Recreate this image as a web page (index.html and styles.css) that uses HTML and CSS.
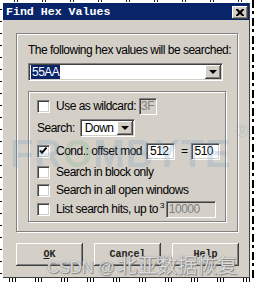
FILE: index.html
```html
<!DOCTYPE html>
<html>
<head>
<meta charset="utf-8">
<link rel="stylesheet" href="styles.css">
</head>
<body>
<div class="edge-left"></div>
<div class="edge-top"></div>
<div class="edge-right"></div>
<div class="edge-bottom"></div>
<div class="frame">
  <div class="titlebar">
    <span class="title">Find Hex Values</span>
    <span class="close"><svg width="8" height="7" viewBox="0 0 8 7"><path d="M0 0h2l2 2 2-2h2v1l-2.5 2.5 2.5 2.5v1h-2l-2-2-2 2h-2v-1l2.5-2.5-2.5-2.5z" fill="#000"/></svg></span>
  </div>
  <div class="content">
    <div class="group outer">
      <div class="lead">The following hex values will be searched:</div>
      <div class="combo">
        <span class="combo-value"><span class="sel">55AA</span></span>
        <span class="arrow-btn"><span class="tri"></span></span>
      </div>
      <div class="group inner">
        <div class="row r1">
          <span class="cb"></span>
          <span class="label">Use as wildcard:</span>
          <span class="field disabled w-wild">3F</span>
        </div>
        <div class="row r2">
          <span class="label">Search:</span>
          <span class="dropdown"><span class="dd-value">Down</span><span class="arrow-btn"><span class="tri"></span></span></span>
        </div>
        <div class="row r3">
          <span class="cb"><svg width="11" height="11" viewBox="0 0 11 11"><path d="M2 4.5l2 2.2 4.5-5" fill="none" stroke="#000" stroke-width="2"/></svg></span>
          <span class="label">Cond.: offset mod</span>
          <span class="field w-num">512</span>
          <span class="eq">=</span>
          <span class="field w-num">510</span>
        </div>
        <div class="row r4">
          <span class="cb"></span>
          <span class="label">Search in block only</span>
        </div>
        <div class="row r5">
          <span class="cb"></span>
          <span class="label">Search in all open windows</span>
        </div>
        <div class="row r6">
          <span class="cb"></span>
          <span class="label">List search hits, up to<sup class="sup">3</sup></span>
          <span class="field disabled w-hits">10000</span>
        </div>
      </div>
    </div>
    <div class="buttons">
      <button class="btn"><u>O</u>K</button>
      <button class="btn">Cancel</button>
      <button class="btn">Help</button>
    </div>
  </div>
</div>
<div class="wm-brand">FR<span class="wm-o">O</span>MBYTE</div>
<div class="wm-reg">®</div>
<div class="wm-csdn"><span class="wm-latin">CSDN @</span>北亚数据恢复</div>
</body>
</html>
```

FILE: styles.css
```css
html, body {
  margin: 0;
  padding: 0;
}
body {
  width: 254px;
  height: 282px;
  position: relative;
  overflow: hidden;
  background: #ffffff;
  font-family: "Liberation Sans", Arial, sans-serif;
  font-size: 12px;
  letter-spacing: -0.5px;
  color: #000;
}
.edge-left {
  position: absolute;
  left: 0; top: 0;
  width: 2px; height: 282px;
  background: repeating-linear-gradient(to bottom, #fff 0 9px, #000 9px 10px, #fff 10px 12px);
}
.edge-top {
  position: absolute;
  left: 0; top: 0;
  width: 254px; height: 2px;
  background: repeating-linear-gradient(to right, #fff 0 14px, #222 14px 15px, #fff 15px 17px, #222 17px 18px, #fff 18px 28px);
}
.edge-right {
  position: absolute;
  right: 0; top: 0;
  width: 2px; height: 282px;
  background: repeating-linear-gradient(to bottom, #000 0 8px, #fff 8px 11px, #000 11px 14px, #fff 14px 18px);
}
.edge-bottom {
  position: absolute;
  left: 0; bottom: 0;
  width: 254px; height: 4px;
  background: repeating-linear-gradient(to right, #fff 0 9px, #000 9px 10px, #fff 10px 12px, #000 12px 13px, #fff 13px 15px, #000 15px 16px, #fff 16px 26px);
}
.frame {
  position: relative;
  margin: 3px 0 0 3px;
  width: 247px;
  height: 275px;
  box-sizing: border-box;
  background: #d4d0c8;
  border-right: 1px solid #404040;
  border-bottom: 1px solid #404040;
  display: flex;
  flex-direction: column;
}
.titlebar {
  height: 17px;
  background: #0a246a;
  display: flex;
  align-items: center;
  justify-content: space-between;
  padding: 0 1px 0 3px;
}
.title {
  color: #fff;
  font-family: "Liberation Mono", "DejaVu Sans Mono", monospace;
  font-weight: bold;
  font-size: 11.6px;
  letter-spacing: 0;
  white-space: nowrap;
}
.close {
  width: 16px;
  height: 13px;
  box-sizing: border-box;
  background: #d4d0c8;
  box-shadow: inset -1px -1px #404040, inset 1px 1px #fff, inset -2px -2px #808080;
  display: flex;
  align-items: center;
  justify-content: center;
  margin-top: 1px;
}
.content {
  padding: 13px 0 0 13px;
}
.group {
  box-sizing: border-box;
  border: 1px solid #808080;
  box-shadow: 1px 1px 0 #fff, inset 1px 1px 0 #fff;
}
.outer {
  width: 222px;
  height: 199px;
  padding: 9px 0 0 11px;
}
.lead {
  line-height: 15px;
  white-space: nowrap;
}
.combo {
  margin-top: 5px;
  width: 195px;
  height: 18px;
  box-sizing: border-box;
  background: #fff;
  border: 1px solid;
  border-color: #808080 #fff #fff #808080;
  box-shadow: inset 1px 1px #404040, inset -1px -1px #d4d0c8;
  display: flex;
  align-items: stretch;
  padding: 1px;
}
.combo-value {
  flex: 1;
  display: flex;
  align-items: center;
  padding-left: 1px;
}
.sel {
  background: #0a246a;
  color: #fff;
  line-height: 14px;
  padding: 0 1px;
}
.arrow-btn {
  width: 16px;
  box-sizing: border-box;
  background: #d4d0c8;
  box-shadow: inset -1px -1px #404040, inset 1px 1px #fff, inset -2px -2px #808080;
  display: flex;
  align-items: center;
  justify-content: center;
}
.tri {
  width: 0;
  height: 0;
  border-left: 4px solid transparent;
  border-right: 4px solid transparent;
  border-top: 4px solid #000;
}
.inner {
  margin-top: 10px;
  width: 198px;
  height: 131px;
  padding: 0 0 0 8px;
  display: flex;
  flex-direction: column;
}
.row {
  height: 18px;
  display: flex;
  align-items: center;
  white-space: nowrap;
}
.r1 { margin-top: 5px; }
.r2 { margin-top: 4px; }
.r3 { margin-top: 5px; }
.r4 { margin-top: 3px; }
.r5 { margin-top: 0; }
.r6 { margin-top: 1px; }
.cb {
  width: 13px;
  height: 13px;
  box-sizing: border-box;
  background: #fff;
  border: 1px solid;
  border-color: #808080 #fff #fff #808080;
  box-shadow: inset 1px 1px #404040, inset -1px -1px #d4d0c8;
  margin-right: 6px;
  display: flex;
  align-items: center;
  justify-content: center;
}
.cb svg { display: block; }
.label { line-height: 15px; }
.sup {
  font-size: 8px;
  vertical-align: 5px;
  line-height: 0;
  margin-left: 2px;
}
.field {
  height: 17px;
  box-sizing: border-box;
  background: #fff;
  border: 1px solid;
  border-color: #808080 #fff #fff #808080;
  box-shadow: inset 1px 1px #404040, inset -1px -1px #d4d0c8;
  padding: 0 3px;
  line-height: 15px;
}
.disabled {
  background: #d4d0c8;
  color: #808080;
}
.w-wild { width: 18px; margin-left: 3px; padding: 0 1px; }
.w-num { width: 29px; }
.r3 .label { margin-right: 4px; }
.eq { margin: 0 3px 0 6px; }
.w-hits { width: 50px; margin-left: 2px; padding: 0 2px; }
.dropdown {
  margin-left: 5px;
  width: 55px;
  height: 18px;
  box-sizing: border-box;
  background: #fff;
  border: 1px solid;
  border-color: #808080 #fff #fff #808080;
  box-shadow: inset 1px 1px #404040, inset -1px -1px #d4d0c8;
  padding: 1px;
  display: flex;
  align-items: stretch;
}
.dd-value {
  flex: 1;
  display: flex;
  align-items: center;
  padding-left: 3px;
}
.buttons {
  margin-top: 11px;
  display: flex;
  gap: 11px;
}
.btn {
  width: 67px;
  height: 23px;
  margin: 0;
  padding: 0;
  box-sizing: border-box;
  border: none;
  background: #d4d0c8;
  box-shadow: inset -1px -1px #404040, inset 1px 1px #fff, inset -2px -2px #808080;
  font-family: "Liberation Mono", "DejaVu Sans Mono", monospace;
  font-weight: bold;
  font-size: 10px;
  letter-spacing: 0;
  color: #222;
  text-align: center;
}
.wm-brand {
  position: absolute;
  left: 10px;
  top: 133px;
  font-family: "Liberation Sans", Arial, sans-serif;
  font-weight: bold;
  font-size: 38px;
  letter-spacing: 1px;
  color: rgba(110, 150, 190, 0.22);
  pointer-events: none;
  white-space: nowrap;
}
.wm-o { color: rgba(110, 180, 120, 0.22); }
.wm-reg {
  position: absolute;
  left: 236px;
  top: 122px;
  font-family: "Liberation Sans", Arial, sans-serif;
  font-size: 17px;
  letter-spacing: 0;
  color: rgba(110, 150, 190, 0.25);
}
.wm-csdn {
  position: absolute;
  left: 47px;
  top: 250px;
  font-family: "Liberation Sans", "Noto Sans CJK SC", sans-serif;
  font-size: 20px;
  letter-spacing: 0;
  color: rgba(235, 235, 235, 0.85);
  text-shadow: 0 0 1px #777, 1px 1px 1px #888;
  white-space: nowrap;
  pointer-events: none;
}
.wm-latin {
  font-size: 17px;
  letter-spacing: -0.5px;
  margin-right: 3px;
}
```
